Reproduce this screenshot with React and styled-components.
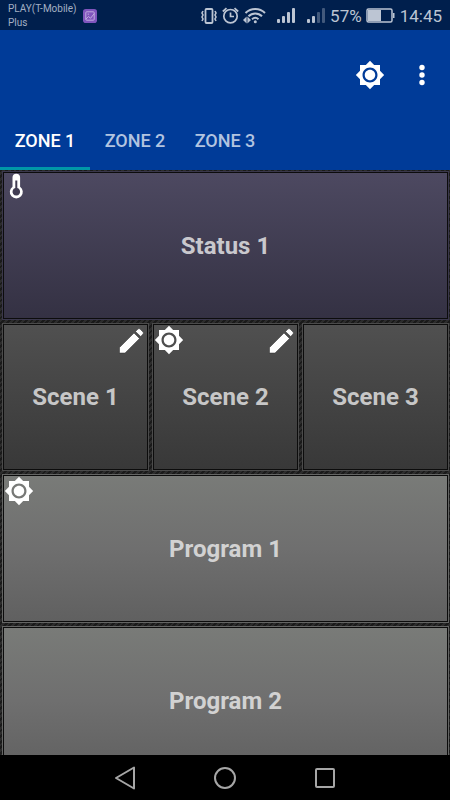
import React, { useState } from "react";
import styled, { createGlobalStyle } from "styled-components";

const Global = createGlobalStyle`
  * { box-sizing: border-box; }
  html, body { margin: 0; background: #1c1c1c; }
  body { font-family: Roboto, "Liberation Sans", sans-serif; }
  button { font: inherit; color: inherit; border: 0; padding: 0; margin: 0; background: none; cursor: pointer; }
  svg { display: block; }
`;

const Screen = styled.div`
  height: 100vh;
  display: flex;
  flex-direction: column;
  overflow: hidden;
`;

const StatusBar = styled.div`
  flex: none;
  height: 30px;
  padding: 1px 8px 0;
  display: flex;
  align-items: center;
  justify-content: space-between;
  background: #001f4d;
  color: #bcc5d3;
`;

const Carrier = styled.div`
  display: flex;
  align-items: center;
  gap: 6px;
  font-size: 10px;
  line-height: 14px;
  color: #a3afc3;
`;

const Indicators = styled.div`
  display: flex;
  align-items: center;
  gap: 4px;
  font-size: 17px;
  line-height: 28px;
`;

const Signals = styled.div`
  display: flex;
  align-items: center;
  gap: 10px;
  padding-left: 6px;
`;

const Time = styled.span`
  padding-left: 1px;
`;

const Header = styled.header`
  flex: none;
  background: #003b98;
  color: #fff;
`;

const Toolbar = styled.div`
  height: 90px;
  padding-right: 13px;
  display: flex;
  align-items: center;
  justify-content: flex-end;
  gap: 22px;
`;

const IconButton = styled.button`
  width: 30px;
  height: 30px;
  display: grid;
  place-items: center;
`;

const Tabs = styled.nav`
  display: flex;
`;

const Tab = styled.button`
  && {
    height: 50px;
    width: 90px;
    padding-bottom: 6px;
    border-bottom: 3px solid ${(p) => (p.$active ? "#0097a7" : "transparent")};
    font-size: 18px;
    font-weight: 500;
    line-height: 24px;
    color: ${(p) => (p.$active ? "#fff" : "#b2c4e0")};
  }
`;

const Board = styled.main`
  flex: 1;
  min-height: 0;
  overflow: hidden;
  padding: 1px 1px 1px 2px;
  display: grid;
  grid-template-columns: repeat(3, 1fr);
  grid-template-rows: 149px 148px 149px 149px;
  gap: 3px;
  background: repeating-linear-gradient(135deg, #1a1a1a 0 2px, #2c2c2c 2px 4px);
`;

const tones = {
  status: { edge: "#3a374c", fill: "linear-gradient(#4d4961, #343143)", ink: "#c9c8cd" },
  scene: { edge: "#4b4b4b", fill: "linear-gradient(#505050, #383838)", ink: "#c7c7c7" },
  program: { edge: "#646564", fill: "linear-gradient(#797b78, #6f6f6f 50%, #606060)", ink: "#d2d2d2" },
};

const TileButton = styled.button`
  && {
    min-width: 0;
    grid-column: span ${(p) => (p.$wide ? 3 : 1)};
    display: grid;
    grid-template-columns: 1fr 1fr;
    grid-template-rows: 34px 1fr 34px;
    padding: 0 1px;
    border: 1px solid ${(p) => tones[p.$tone].edge};
    box-shadow: inset 0 0 0 1px #0c0c0c;
    background: ${(p) => tones[p.$tone].fill};
    color: ${(p) => tones[p.$tone].ink};
  }
`;

const Label = styled.span`
  grid-row: 2;
  grid-column: 1 / -1;
  align-self: center;
  font-size: 24px;
  line-height: 32px;
  font-weight: 700;
  text-align: center;
`;

const Corner = styled.span`
  grid-row: 1;
  grid-column: ${(p) => (p.$end ? 2 : 1)};
  justify-self: ${(p) => (p.$end ? "end" : "start")};
  align-self: start;
  padding-top: 1px;
  color: #fff;
`;

const NavBar = styled.nav`
  flex: none;
  height: 45px;
  display: flex;
  align-items: center;
  justify-content: center;
  gap: 70px;
  background: #000;
  color: #a6a6a6;
`;

const Sun = () => (
  <svg width="30" height="30" viewBox="0 0 24 24" fill="currentColor" aria-hidden="true">
    <path d="M20 8.69V4h-4.69L12 .69 8.69 4H4v4.69L.69 12 4 15.31V20h4.69L12 23.31 15.31 20H20v-4.69L23.31 12 20 8.69zM12 18c-3.31 0-6-2.69-6-6s2.69-6 6-6 6 2.69 6 6-2.69 6-6 6zm0-10.2c-2.3 0-4.2 1.9-4.2 4.2s1.9 4.2 4.2 4.2 4.2-1.9 4.2-4.2-1.9-4.2-4.2-4.2z" />
  </svg>
);

const Pencil = () => (
  <svg width="31" height="32" viewBox="0 0 31 32" aria-hidden="true">
    <path d="M3.5 28V22.5L18 8l5.5 5.5L9 28zM19.5 6.5L22 4q1-1 2 0l3 3q1 1 0 2l-2.3 2.5z" fill="currentColor" stroke="#2e2e2e" strokeWidth=".5" />
  </svg>
);

const Thermometer = () => (
  <svg width="26" height="30" viewBox="0 0 26 30" aria-hidden="true">
    <path d="M8.5 4.5a3.8 3.8 0 0 1 7.6 0v9.2a6.5 6.5 0 1 1-7.6 0z" fill="currentColor" />
    <path d="M11.3 7.5h2v7.6a3.8 3.8 0 1 1-2 0z" fill="#403c52" />
  </svg>
);

const More = () => (
  <svg width="30" height="30" viewBox="0 0 30 30" fill="currentColor" aria-hidden="true">
    <circle cx="15" cy="7.5" r="2.7" />
    <circle cx="15" cy="15" r="2.7" />
    <circle cx="15" cy="22.5" r="2.7" />
  </svg>
);

const CarrierBadge = () => (
  <svg width="14" height="14" viewBox="0 0 15 15" fill="none" aria-hidden="true">
    <rect width="15" height="15" rx="3" fill="#8055bd" />
    <g stroke="#c5b2e2">
      <rect x="3" y="3" width="9" height="9" rx="1" />
      <path d="M3 11l3-3 2 2 4-5M5 5.5h1.5" />
    </g>
  </svg>
);

const Vibrate = () => (
  <svg width="18" height="16" viewBox="0 0 18 16" fill="none" stroke="currentColor" strokeWidth="1.8" aria-hidden="true">
    <rect x="5.5" y="1" width="7" height="14" rx="1" />
    <path d="M3 3L2 5l1 2-1 2 1 2-1 2M15 3l1 2-1 2 1 2-1 2 1 2" strokeWidth="1.6" />
  </svg>
);

const Alarm = () => (
  <svg width="17" height="17" viewBox="0 0 17 17" fill="none" stroke="currentColor" strokeWidth="1.7" aria-hidden="true">
    <circle cx="8.5" cy="9.2" r="6.7" />
    <path d="M8.5 5.5V9.5H12M.8 4.5L4.5 1.2M16.2 4.5L12.5 1.2" />
  </svg>
);

const Wifi = () => (
  <svg width="23" height="17" viewBox="0 0 23 17" fill="none" stroke="currentColor" strokeWidth="2" aria-hidden="true">
    <path d="M2.5 6a14 14 0 0 1 19.5 0M5.5 9.2a9.5 9.5 0 0 1 13.5 0M9 12.2a5 5 0 0 1 6.5 0" />
    <circle cx="12.3" cy="14.7" r="1.5" fill="currentColor" stroke="none" />
    <path d="M3.6 9.5v7L0 13zM4.4 9.5v7L8 13z" fill="currentColor" stroke="none" />
  </svg>
);

const Signal = ({ level }) => (
  <svg width="20" height="17" viewBox="0 0 20 17" fill="currentColor" aria-hidden="true">
    {[4, 7, 11, 15].map((h, i) => (
      <rect key={h} x={i * 5 + 1} y={16 - h} width="3" height={h} rx="1" opacity={i < level ? 1 : 0.35} />
    ))}
  </svg>
);

const Battery = () => (
  <svg width="29" height="15" viewBox="0 0 29 15" aria-hidden="true">
    <rect x="1" y="1" width="25" height="13" rx="1.5" fill="none" stroke="currentColor" strokeWidth="1.5" />
    <path d="M2 2h13v11H2zM27 5h1.5v5H27z" fill="currentColor" />
  </svg>
);

const Back = () => (
  <svg width="30" height="30" viewBox="0 0 30 30" fill="none" stroke="currentColor" strokeWidth="2" strokeLinejoin="round" aria-hidden="true">
    <path d="M24 4.5v21L6 15z" />
  </svg>
);

const Home = () => (
  <svg width="30" height="30" viewBox="0 0 30 30" fill="none" stroke="currentColor" strokeWidth="2" aria-hidden="true">
    <circle cx="15" cy="15" r="10" />
  </svg>
);

const Recent = () => (
  <svg width="30" height="30" viewBox="0 0 30 30" fill="none" stroke="currentColor" strokeWidth="2" aria-hidden="true">
    <rect x="6" y="6" width="18" height="18" rx="1" />
  </svg>
);

const tiles = [
  { name: "Status 1", tone: "status", wide: true, start: Thermometer },
  { name: "Scene 1", tone: "scene", end: Pencil },
  { name: "Scene 2", tone: "scene", start: Sun, end: Pencil },
  { name: "Scene 3", tone: "scene" },
  { name: "Program 1", tone: "program", wide: true, start: Sun },
  { name: "Program 2", tone: "program", wide: true },
];

const Tile = ({ name, tone, wide, start: Start, end: End }) => (
  <TileButton $tone={tone} $wide={wide}>
    {Start && <Corner><Start /></Corner>}
    {End && <Corner $end><End /></Corner>}
    <Label>{name}</Label>
  </TileButton>
);

export default function App() {
  const [zone, setZone] = useState("ZONE 1");
  return (
    <Screen>
      <Global />
      <StatusBar>
        <Carrier>
          <span>PLAY(T-Mobile)<br />Plus</span>
          <CarrierBadge />
        </Carrier>
        <Indicators>
          <Vibrate />
          <Alarm />
          <Wifi />
          <Signals>
            <Signal level={4} />
            <Signal level={2} />
          </Signals>
          <span>57%</span>
          <Battery />
          <Time>14:45</Time>
        </Indicators>
      </StatusBar>
      <Header>
        <Toolbar>
          <IconButton aria-label="Brightness"><Sun /></IconButton>
          <IconButton aria-label="More options"><More /></IconButton>
        </Toolbar>
        <Tabs>
          {["ZONE 1", "ZONE 2", "ZONE 3"].map((z) => (
            <Tab key={z} $active={z === zone} aria-pressed={z === zone} onClick={() => setZone(z)}>{z}</Tab>
          ))}
        </Tabs>
      </Header>
      <Board>
        {tiles.map((t) => <Tile key={t.name} {...t} />)}
      </Board>
      <NavBar>
        <IconButton aria-label="Back"><Back /></IconButton>
        <IconButton aria-label="Home"><Home /></IconButton>
        <IconButton aria-label="Recent apps"><Recent /></IconButton>
      </NavBar>
    </Screen>
  );
}
